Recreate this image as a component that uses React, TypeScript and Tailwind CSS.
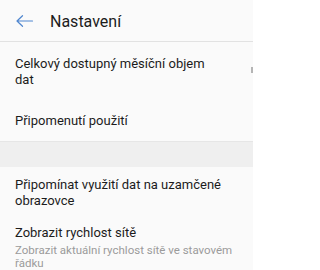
export default function App() {
  return (
    <div className="w-[253px] h-[270px] overflow-hidden bg-[#fafafa] font-['Roboto',sans-serif] text-[#1c1c1c]">
      {/* Header */}
      <div className="h-[42px] flex items-center border-b border-[#e2e2e2]">
        <svg className="ml-[16px] mt-[1px] w-[18px] h-[12px]" viewBox="0 0 18 12" fill="none" stroke="#4f86cf" strokeWidth="1.2" strokeLinecap="round" strokeLinejoin="round">
          <path d="M16.5 6H1M6.5 0.7L1 6L6.5 11.3" />
        </svg>
        <span className="ml-[16px] text-[16px] leading-none pt-[2px]">Nastavení</span>
      </div>

      <div className="flex pl-[15px] pt-[14px] pb-[12px] text-[13px] leading-[16px]">
        <div className="w-[200px]">Celkový dostupný měsíční objem dat</div>
        <div className="ml-auto mt-[11px] w-[2px] h-[6px] bg-[#b5b5b5]" />
      </div>
      <div className="pl-[15px] pt-[13px] pb-[12px] text-[13px] leading-[16px]">Připomenutí použití</div>

      <div className="h-[26px] bg-[#efefef] border-t border-[#e6e6e6]" />

      <div className="pl-[15px] pr-[12px] pt-[10px] text-[13px] leading-[16px]">
        Připomínat využití dat na uzamčené obrazovce
      </div>
      <div className="pl-[15px] pr-[12px] pt-[16px]">
        <div className="text-[13px] leading-[16px]">Zobrazit rychlost sítě</div>
        <div className="w-[220px] text-[11.5px] leading-[13px] text-[#9b9b9b] mt-[3px]">
          Zobrazit aktuální rychlost sítě ve stavovém řádku
        </div>
      </div>
    </div>
  );
}
